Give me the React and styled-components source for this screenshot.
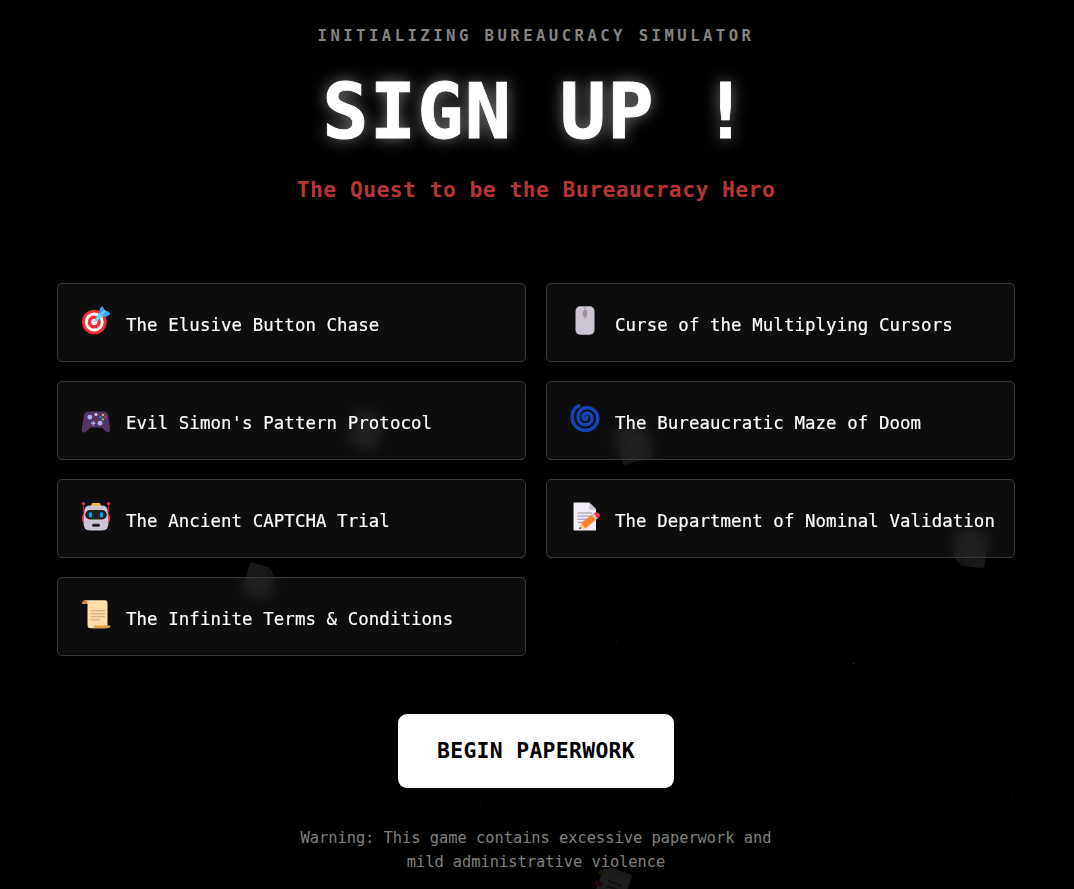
import React from 'react';
import styled, { createGlobalStyle } from 'styled-components';

const GlobalStyle = createGlobalStyle`
  * { box-sizing: border-box; }
  html, body { margin: 0; background: #000; }
  body { overflow: hidden; font-family: "DejaVu Sans Mono", "Liberation Mono", monospace; }
`;

const Page = styled.main`
  position: relative;
  height: 889px;
  padding: 0 59px 0 57px;
  overflow: hidden;
  display: flex;
  flex-direction: column;
  align-items: center;
  background: #000;
  color: #fff;
`;

const Header = styled.header`
  display: flex;
  flex-direction: column;
  align-items: center;
  white-space: pre;
`;

const Eyebrow = styled.div`
  margin-top: 24px;
  font-size: 15.6px;
  line-height: 24px;
  font-weight: 700;
  letter-spacing: 3.46px;
  color: #858585;
`;

const Title = styled.h1`
  margin: 16px 0 0;
  font-size: 77px;
  line-height: 96px;
  font-weight: 700;
  letter-spacing: 1.15px;
  -webkit-text-stroke: 0.8px #fff;
  text-shadow: 0 0 16px rgba(255, 255, 255, 0.5);
`;

const Tagline = styled.p`
  margin: 15px 0 0;
  font-size: 21.4px;
  line-height: 30px;
  font-weight: 700;
  letter-spacing: 0.41px;
  color: #b93434;
`;

const Quests = styled.section`
  position: relative;
  z-index: 1;
  width: 958px;
  margin-top: 78px;
  display: grid;
  grid-template-columns: 469px 469px;
  grid-auto-rows: 79px;
  gap: 19px 20px;
`;

const QuestCard = styled.article`
  display: flex;
  align-items: center;
  gap: 15px;
  padding: 0 0 0 23px;
  border: 1px solid #3a3a3a;
  border-radius: 5px;
  background: rgba(255, 255, 255, 0.05);
  backdrop-filter: blur(7px);
`;

const QuestIcon = styled.svg`
  width: 30px;
  height: 30px;
  flex: none;
  margin-bottom: 5px;
`;

const QuestName = styled.span`
  padding-top: 4px;
  font-size: 17.4px;
  line-height: 24px;
  letter-spacing: 0.085px;
  white-space: nowrap;
  -webkit-text-stroke: 0.2px #fff;
`;

const StartButton = styled.button`
  position: relative;
  z-index: 1;
  width: 276px;
  height: 74px;
  margin-top: 58px;
  padding: 0;
  border: 0;
  border-radius: 9px;
  background: #fff;
  color: #000;
  font: 700 21.4px/28px "DejaVu Sans Mono", "Liberation Mono", monospace;
  letter-spacing: 0.32px;
`;

const Warning = styled.p`
  position: relative;
  z-index: 1;
  width: 480px;
  margin: 38px 0 0;
  font-size: 15.4px;
  line-height: 24px;
  letter-spacing: -0.03px;
  text-align: center;
  color: #808080;
`;

const FloatingSheet = styled.svg`
  position: absolute;
  left: ${(p) => p.$x}px;
  top: ${(p) => p.$y}px;
  width: ${(p) => p.$size || 34}px;
  height: ${(p) => p.$size || 34}px;
  opacity: ${(p) => p.$opacity || 0.1};
  transform: rotate(${(p) => p.$turn}deg);
`;

const Speck = styled.i`
  position: absolute;
  left: ${(p) => p.$x}px;
  top: ${(p) => p.$y}px;
  width: 1px;
  height: 1px;
  background: ${(p) => p.$tone || '#222'};
`;

const Sheet = (props) => (
  <FloatingSheet viewBox="0 0 34 34" {...props}>
    <path d="M6 2H23L30 9V30Q30 32 28 32H6Q4 32 4 30V4Q4 2 6 2Z" fill="#eee9f3" />
    <path d="M23 2V9H30M10 14H24M10 19H24M10 24H20" stroke="#9b91a8" strokeWidth="1.5" fill="none" />
  </FloatingSheet>
);

const Bookmarks = (props) => (
  <FloatingSheet viewBox="0 0 34 34" {...props}>
    <rect x="7" y="1" width="24" height="32" rx="2" fill="#c9c1d0" />
    <rect x="3" y="4" width="27" height="29" rx="2" fill="#eee9f3" />
    <path d="M11 14H25M11 19H25" stroke="#7b7287" strokeWidth="2" />
    <rect x="0" y="7" width="6" height="4" fill="#fcb912" />
    <rect x="0" y="17" width="7" height="5" fill="#f8226c" />
  </FloatingSheet>
);

const Target = () => (
  <QuestIcon viewBox="0 0 30 30">
    <circle cx="13.3" cy="17" r="12.3" fill="#f52f35" />
    <circle cx="13.3" cy="17" r="9.4" fill="#fff" />
    <circle cx="13.3" cy="17" r="6.6" fill="#f52f35" />
    <circle cx="13.3" cy="17" r="3.1" fill="#fff" />
    <path d="M13 17L21 9" stroke="#c8c5d2" strokeWidth="1.4" />
    <path d="M14 14L19 7L23 11L16 16Q14 16 14 14Z" fill="#50e2ff" />
    <path d="M18 8L19 3.5L21.5 1L23.5 5L28 7L29.3 9L25 12L21.5 10.8Z" fill="#3da2ff" />
    <path d="M19.5 10L24 5.5" stroke="#50dfff" strokeWidth="2" />
  </QuestIcon>
);

const Mouse = () => (
  <QuestIcon viewBox="0 0 30 30">
    <rect x="5.5" y="1.3" width="19" height="28.4" rx="4.8" fill="#cdc4d6" />
    <path d="M15 1.3V14" stroke="#998ea4" strokeWidth="1" />
    <rect x="12.8" y="5" width="4.4" height="7" rx="2" fill="#998ea4" />
  </QuestIcon>
);

const Gamepad = () => (
  <QuestIcon viewBox="0 0 30 30">
    <path d="M7 8.5H23Q26 8.5 27 12L29.2 26Q29.3 29.8 26.5 29.3Q25.5 29.2 20.5 24.5H9.5L4.5 29.2Q.5 30.5 .8 26L3 12Q4 8.5 7 8.5Z" fill="#533566" />
    <circle cx="8.8" cy="14.2" r="2.4" fill="#aeb3f1" />
    <circle cx="19" cy="20.2" r="2.4" fill="#aeb3f1" />
    <path d="M12.3 18.2V22.4M10.2 20.3H14.4" stroke="#aeb3f1" strokeWidth="1.4" />
    <circle cx="15" cy="11.5" r="1.5" fill="#d7cfdf" />
    <circle cx="22" cy="12" r="1.1" fill="#ffd13b" />
    <circle cx="24.5" cy="14.2" r="1.1" fill="#f52f35" />
    <circle cx="22" cy="16.4" r="1.1" fill="#86d72f" />
    <circle cx="19.5" cy="14.2" r="1.1" fill="#159bff" />
  </QuestIcon>
);

const Cyclone = () => (
  <QuestIcon viewBox="0 0 30 30">
    <path d="M8.8 2.9C3.5 5.3 1.7 9.8 2.2 15C2.8 22.5 8.7 27.4 15.3 27.4C22.3 27.4 27.8 22 27.8 15.6C27.8 9 22.8 4.8 17 4.8C11.4 4.8 8 9 8 14.3C8 18.7 11.3 21.8 15.3 21.8C19.3 21.8 22 19 22 15.5C22 12.2 19.8 10 17 10C14.5 10 13 12 13 14.2C13 16 14.5 16.8 15.6 16.5C16.9 16.2 17 15 17 14" fill="none" stroke="#1345b7" strokeWidth="3.5" strokeLinecap="round" />
  </QuestIcon>
);

const Robot = () => (
  <QuestIcon viewBox="0 0 30 30">
    <path d="M2.5 2V14M27.5 2V14" stroke="#b7222d" strokeWidth="1.2" />
    <circle cx="2.5" cy="2.5" r="1.6" fill="#f52f35" />
    <circle cx="27.5" cy="2.5" r="1.6" fill="#f52f35" />
    <path d="M4 12Q1 13 1 17V19Q1 21 4 22ZM26 12Q29 13 29 17V19Q29 21 26 22Z" fill="#f52f35" />
    <path d="M10 5L11 2H19L20 5Z" fill="#ffb02e" />
    <path d="M9 4.5H21Q26 4.5 26.5 9L27.5 22Q27.5 29.5 21 29.5H9Q2.5 29.5 2.5 22L3.5 9Q4 4.5 9 4.5Z" fill="#cdc4d6" />
    <rect x="4.2" y="9" width="21.6" height="9.4" rx="4.7" fill="#212121" />
    <ellipse cx="9.5" cy="13.7" rx="1.8" ry="2.8" fill="#00a6ed" />
    <ellipse cx="20.5" cy="13.7" rx="1.8" ry="2.8" fill="#00a6ed" />
    <rect x="11" y="22.7" width="8" height="3" rx="1.5" fill="#212121" />
  </QuestIcon>
);

const Memo = () => (
  <QuestIcon viewBox="0 0 30 30">
    <path d="M4 1.5H19.2L26 8V29.5H4.5Q3.5 29.5 3.5 28.5V2Z" fill="#f3edf8" />
    <path d="M19.2 1.5L26 8V8.8H20.5Q19.2 8.8 19.2 7.5Z" fill="#cdc4d6" />
    <path d="M7.5 12H22M7.5 15.1H21M7.5 18.2H18M7.5 21.3H15" stroke="#998ea4" strokeWidth="1" />
    <path d="M9 28L11 22L15.5 27.5Z" fill="#ffce7c" />
    <path d="M9 28L10 25.8L11.4 27.6Z" fill="#402a32" />
    <path d="M11 22L22 13.5L26 18.8L15.3 27.5Z" fill="#ff822d" />
    <path d="M22 13.5L23.8 12.2L27.7 17.5L26 18.8Z" fill="#cdc4d6" />
    <path d="M23.8 12.2Q27 10 29.4 12.8Q31 15.2 27.7 17.5Z" fill="#f8315f" />
  </QuestIcon>
);

const Scroll = () => (
  <QuestIcon viewBox="0 0 30 30">
    <path d="M4 1.2H24Q26.5 1.2 26.5 4V27Q26.5 29.3 24 29.3H9.5Q6.5 29.3 6.5 26V5H4Z" fill="#ffdea7" />
    <path d="M4 1.2Q6.5 1.2 6.5 5H1Q.5 3 2 2.2Q2 1.2 4 1.2Z" fill="#d3883e" />
    <path d="M13.5 26.6H29.3Q30 29.3 26.5 29.3H11.5Q13.5 28.8 13.5 26.6Z" fill="#e39d4b" />
    <path d="M10 11.8H23.5M10 14.8H23.5M10 17.8H23.5M10 20.8H18.5" stroke="#d3a065" strokeWidth="1" strokeLinecap="round" />
  </QuestIcon>
);

const quests = [
  { name: 'The Elusive Button Chase', Icon: Target },
  { name: 'Curse of the Multiplying Cursors', Icon: Mouse },
  { name: "Evil Simon's Pattern Protocol", Icon: Gamepad },
  { name: 'The Bureaucratic Maze of Doom', Icon: Cyclone },
  { name: 'The Ancient CAPTCHA Trial', Icon: Robot },
  { name: 'The Department of Nominal Validation', Icon: Memo },
  { name: 'The Infinite Terms & Conditions', Icon: Scroll },
];

export default function App() {
  return (
    <>
      <GlobalStyle />
      <Page>
        <Sheet $x={347} $y={411} $size={38} $turn={20} />
        <Sheet $x={613} $y={423} $size={41} $turn={-17} />
        <Sheet $x={241} $y={563} $size={36} $turn={16} />
        <Sheet $x={950} $y={528} $size={41} $turn={186} />
        <Bookmarks $x={595} $y={868} $size={36} $turn={20} $opacity={0.12} />
        <Speck $x={726} $y={58} />
        <Speck $x={853} $y={663} $tone="#444" />
        <Speck $x={616} $y={641} />
        <Speck $x={480} $y={802} />
        <Speck $x={1011} $y={796} />
        <Speck $x={118} $y={822} />
        <Header>
          <Eyebrow>INITIALIZING BUREAUCRACY SIMULATOR</Eyebrow>
          <Title>SIGN UP !</Title>
          <Tagline>The Quest to be the Bureaucracy Hero</Tagline>
        </Header>
        <Quests>
          {quests.map(({ name, Icon }) => (
            <QuestCard key={name}>
              <Icon />
              <QuestName>{name}</QuestName>
            </QuestCard>
          ))}
        </Quests>
        <StartButton>BEGIN PAPERWORK</StartButton>
        <Warning>Warning: This game contains excessive paperwork and mild administrative violence</Warning>
      </Page>
    </>
  );
}
